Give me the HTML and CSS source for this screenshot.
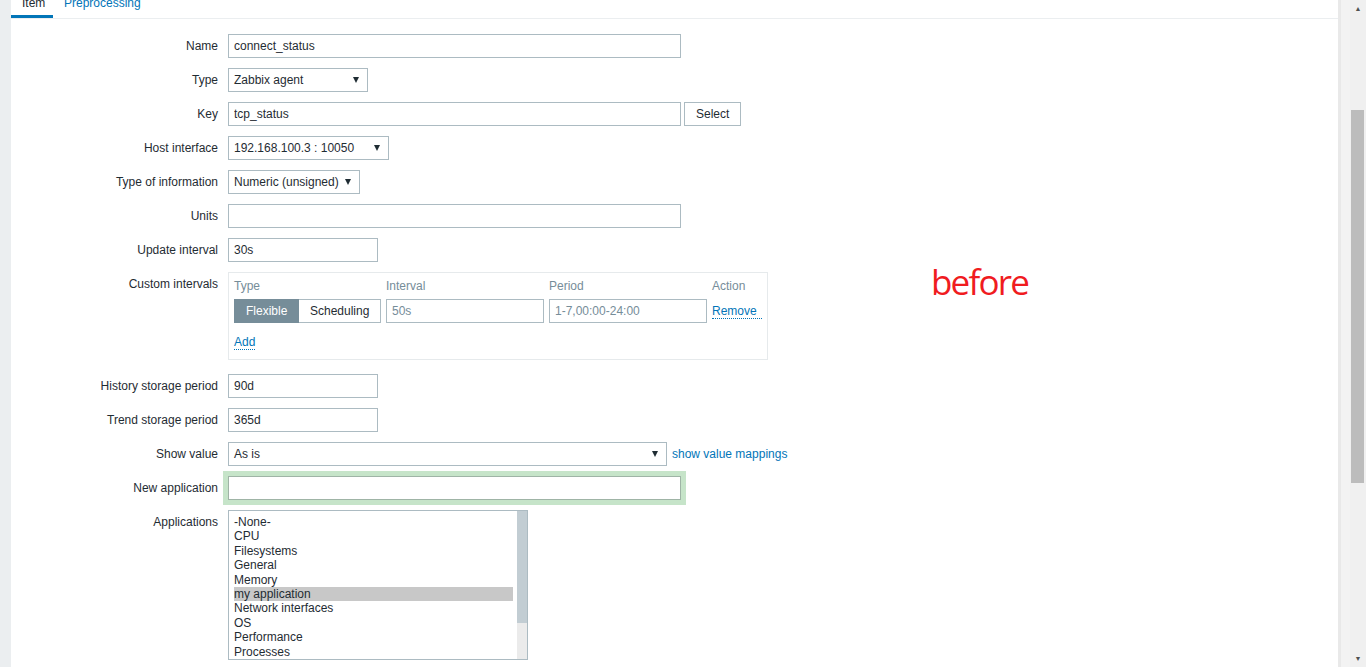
FILE: index.html
```html
<!DOCTYPE html>
<html lang="en">
<head>
    <meta charset="UTF-8">
    <title>Items</title>
    <link rel="stylesheet" href="styles.css">
</head>
<body>

<div class="page">
    <div class="gutter-left"></div>

    <div class="main">
        <ul class="tabs">
            <li class="tab active">Item</li>
            <li class="tab">Preprocessing</li>
        </ul>

        <div class="form">
            <div class="row">
                <div class="label">Name</div>
                <input class="field w-long" type="text" value="connect_status">
            </div>

            <div class="row">
                <div class="label">Type</div>
                <div class="select" style="width: 140px"><span>Zabbix agent</span><i class="arrow"></i></div>
            </div>

            <div class="row">
                <div class="label">Key</div>
                <input class="field w-long" type="text" value="tcp_status">
                <div class="btn">Select</div>
            </div>

            <div class="row">
                <div class="label">Host interface</div>
                <div class="select" style="width: 161px"><span>192.168.100.3 : 10050</span><i class="arrow"></i></div>
            </div>

            <div class="row">
                <div class="label">Type of information</div>
                <div class="select" style="width: 132px"><span>Numeric (unsigned)</span><i class="arrow"></i></div>
            </div>

            <div class="row">
                <div class="label">Units</div>
                <input class="field w-long" type="text" value="">
            </div>

            <div class="row">
                <div class="label">Update interval</div>
                <input class="field w-short" type="text" value="30s">
            </div>

            <!-- custom intervals -->
            <div class="row row-top row-intervals">
                <div class="label">Custom intervals</div>
                <div class="intervals">
                    <div class="iv-grid">
                        <div class="iv-head">Type</div>
                        <div class="iv-head">Interval</div>
                        <div class="iv-head">Period</div>
                        <div class="iv-head">Action</div>

                        <div class="radio-group">
                            <div class="radio on">Flexible</div>
                            <div class="radio">Scheduling</div>
                        </div>
                        <input class="field field-muted" type="text" value="50s">
                        <input class="field field-muted" type="text" value="1-7,00:00-24:00">
                        <a class="link dotted">Remove</a>
                    </div>
                    <div class="iv-add"><a class="link dotted">Add</a></div>
                </div>
                <div class="note">before</div>
            </div>

            <div class="row">
                <div class="label">History storage period</div>
                <input class="field w-short" type="text" value="90d">
            </div>

            <div class="row">
                <div class="label">Trend storage period</div>
                <input class="field w-short" type="text" value="365d">
            </div>

            <div class="row">
                <div class="label">Show value</div>
                <div class="select" style="width: 439px"><span>As is</span><i class="arrow"></i></div>
                <a class="link map-link">show value mappings</a>
            </div>

            <div class="row">
                <div class="label">New application</div>
                <input class="field w-long focused" type="text" value="">
            </div>

            <div class="row row-top">
                <div class="label">Applications</div>
                <div class="listbox">
                    <ul class="options">
                        <li>-None-</li>
                        <li>CPU</li>
                        <li>Filesystems</li>
                        <li>General</li>
                        <li>Memory</li>
                        <li class="selected">my application</li>
                        <li>Network interfaces</li>
                        <li>OS</li>
                        <li>Performance</li>
                        <li>Processes</li>
                    </ul>
                    <div class="lb-scroll"><div class="lb-thumb"></div></div>
                </div>
            </div>
        </div>
    </div>

    <div class="gutter-right"></div>

    <div class="scrollbar">
        <div class="sb-arrow">&#9650;</div>
        <div class="sb-track"><div class="sb-thumb"></div></div>
        <div class="sb-arrow">&#9660;</div>
    </div>
</div>

</body>
</html>
```

FILE: styles.css
```css
* {
    margin: 0;
    padding: 0;
    box-sizing: border-box;
}

body {
    font-family: "Liberation Sans", Arial, sans-serif;
    font-size: 12px;
    color: #1f2c33;
    background-color: #ebeef0;
    height: 667px;
    overflow: hidden;
}

.page {
    display: flex;
    height: 667px;
}

.gutter-left {
    width: 11px;
    background-color: #ebeef0;
}

.main {
    flex: 1;
    background-color: #fff;
    overflow: hidden;
}

.gutter-right {
    width: 12px;
    background-color: #f3f3f3;
    border-left: 3px solid #e9e9e9;
}

/* page scrollbar */
.scrollbar {
    width: 16px;
    display: flex;
    flex-direction: column;
    background-color: #f0f0f0;
}

.sb-arrow {
    height: 17px;
    font-size: 7px;
    line-height: 17px;
    text-align: center;
    color: #505050;
}

.sb-track {
    flex: 1;
}

.sb-thumb {
    margin: 93px 2px 0 1px;
    height: 373px;
    background-color: #bcbcbc;
}

/* tabs */
.tabs {
    list-style: none;
    display: flex;
    margin-top: -10px;
    border-bottom: 1px solid #ebeef0;
}

.tab {
    padding: 6px 11px 5px;
    line-height: 14px;
    color: #0275b8;
    border-bottom: 3px solid transparent;
}

.tab.active {
    width: 42px;
    color: #1f2c33;
    border-bottom-color: #0275b8;
}

/* form */
.form {
    padding-top: 15px;
}

.row {
    display: flex;
    align-items: center;
    margin-bottom: 10px;
}

.row-top {
    align-items: flex-start;
}

.label {
    width: 217px;
    padding-right: 10px;
    text-align: right;
    line-height: 14px;
}

.row-top .label {
    padding-top: 5px;
}

.field {
    height: 24px;
    padding: 0 5px;
    border: 1px solid #acbbc2;
    font-family: "Liberation Sans", Arial, sans-serif;
    font-size: 12px;
    color: #1f2c33;
    background-color: #fff;
    outline: none;
}

.w-long {
    width: 453px;
}

.w-short {
    width: 150px;
}

.field-muted {
    color: #768d99;
}

.focused {
    box-shadow: 0 0 0 5px #c6e4c9;
    border-color: #9fb4a6;
}

.select {
    height: 24px;
    padding: 0 8px 0 5px;
    border: 1px solid #acbbc2;
    display: flex;
    align-items: center;
    justify-content: space-between;
    background-color: #fff;
}

.arrow {
    width: 0;
    height: 0;
    border-left: 3px solid transparent;
    border-right: 3px solid transparent;
    border-top: 6px solid #1f2c33;
}

.btn {
    height: 24px;
    margin-left: 3px;
    padding: 0 11px;
    border: 1px solid #acbbc2;
    line-height: 22px;
    background-color: #fff;
}

.link {
    color: #0275b8;
    text-decoration: none;
    cursor: pointer;
}

.dotted {
    border-bottom: 1px dotted #0275b8;
}

.map-link {
    margin-left: 5px;
}

/* custom intervals table */
.row-intervals {
    margin-bottom: 14px;
}

.row-intervals .label {
    padding-top: 5px;
}

.intervals {
    width: 540px;
    height: 88px;
    padding: 6px 5px 0;
    border: 1px solid #e6eaec;
}

.iv-grid {
    display: grid;
    grid-template-columns: 147px 158px 158px auto;
    column-gap: 5px;
    row-gap: 6px;
    align-items: center;
}

.iv-head {
    color: #768d99;
    line-height: 14px;
}

.radio-group {
    display: flex;
    height: 24px;
}

.radio {
    height: 24px;
    padding: 0 11px;
    line-height: 22px;
    border: 1px solid #acbbc2;
    background-color: #fff;
}

.radio.on {
    background-color: #768d99;
    border-color: #768d99;
    color: #fff;
    width: 65px;
}

.radio + .radio {
    flex: 1;
    border-left: none;
    text-align: center;
}

.iv-add {
    padding-top: 12px;
    line-height: 14px;
}

.note {
    margin-left: 163px;
    margin-top: -14px;
    font-family: "Open Sans", sans-serif;
    font-size: 35px;
    letter-spacing: -1.8px;
    color: #f01c1f;
}

/* applications list */
.listbox {
    width: 300px;
    height: 150px;
    border: 1px solid #acbbc2;
    display: flex;
    background-color: #fff;
}

.options {
    list-style: none;
    flex: 1;
    padding: 4px 4px 0 5px;
}

.options li {
    line-height: 14.4px;
    height: 14.4px;
}

.options li.selected {
    background-color: #c8c8c8;
}

.lb-scroll {
    width: 10px;
    background-color: #ebebeb;
}

.lb-thumb {
    height: 112px;
    background-color: #c2cdd3;
}
```
